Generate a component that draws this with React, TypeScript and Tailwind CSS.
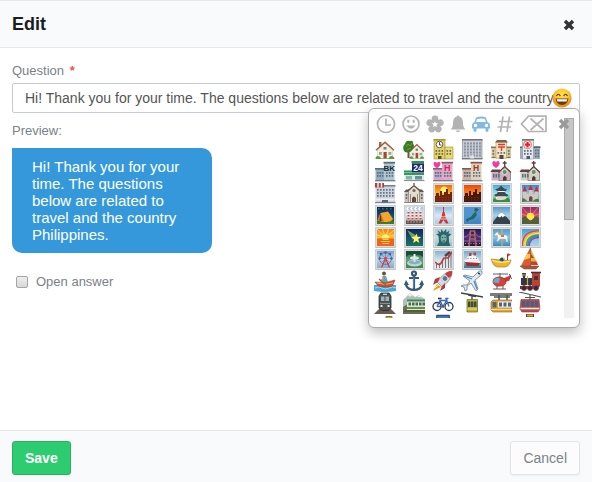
import { useId, type ReactNode } from 'react'

type P = { children?: ReactNode }

function Cell({ children }: P) {
  return (
    <svg viewBox="0 0 22 22" className="block size-[22px]" aria-hidden="true">
      {children}
    </svg>
  )
}

function Tile({ top, mid, bottom, children }: P & { top: string; mid?: string; bottom: string }) {
  const id = useId()
  return (
    <Cell>
      <defs>
        <linearGradient id={`${id}g`} x1="0" y1="0" x2="0" y2="1">
          <stop offset="0" stopColor={top} />
          <stop offset="0.5" stopColor={mid ?? top} />
          <stop offset="1" stopColor={bottom} />
        </linearGradient>
        <clipPath id={`${id}c`}>
          <rect x="3" y="3" width="17" height="17" />
        </clipPath>
      </defs>
      <rect x="1" y="1" width="21" height="21" rx="1" fill="#bfc2c5" />
      <rect x="1.500" y="1.500" width="20" height="19.500" rx="1" fill="#d9dcde" />
      <rect x="3" y="3" width="17" height="17" fill={`url(#${id}g)`} />
      <g clipPath={`url(#${id}c)`}>{children}</g>
    </Cell>
  )
}

function Win({ x, y, c, r, dx = 3, dy = 3, w = 1.6, h = 1.8, f = '#5d7186' }: { x: number; y: number; c: number; r: number; dx?: number; dy?: number; w?: number; h?: number; f?: string }) {
  return (
    <>
      {Array.from({ length: c * r }, (_, i) => (
        <rect key={i} x={x + (i % c) * dx} y={y + Math.floor(i / c) * dy} width={w} height={h} fill={f} />
      ))}
    </>
  )
}

const heart = (x: number, y: number, s: number, f = '#f23c9c') => (
  <path transform={`translate(${x} ${y}) scale(${s})`} d="M0 4C-5 1-4-3-2-3Q0-3 0-1Q0-3 2-3C4-3 5 1 0 4Z" fill={f} />
)

const house = (
  <>
    <rect x="5" y="4" width="2.500" height="5" fill="#9a6a55" />
    <path d="M3.500 12 11 5 18.500 12V20.500H3.500Z" fill="#f7efd6" stroke="#cdbd98" strokeWidth=".5" />
    <path d="M2 12.300 11 4.300 20 12.300" fill="none" stroke="#9d5a4b" strokeWidth="1.400" />
    <rect x="9.500" y="9" width="3" height="2.500" fill="#5f87a8" />
    <rect x="9.500" y="14" width="3.200" height="6.500" fill="#9c4a3c" />
    <rect x="5" y="14" width="2.800" height="2.800" fill="#7fa9c4" />
    <rect x="14.500" y="14" width="2.800" height="2.800" fill="#7fa9c4" />
    <path d="M1.500 21q0-3 2.500-3t3 2.500h8q0-2.500 2.500-2.500t3 3Z" fill="#5a9a3c" />
  </>
)

const towers = (a: string, b: string, roof: string) => (
  <>
    <rect x="1.500" y="9" width="10" height="12" fill={b} />
    <rect x="1" y="8" width="10" height="1.600" fill={roof} />
    <rect x="10" y="3" width="10.500" height="18" fill={a} />
    <rect x="9.500" y="1.800" width="11.500" height="1.700" fill={roof} />
    <Win x={3} y={12} c={3} r={2} dx={2.400} />
    <Win x={12} y={12} c={3} r={2} dx={2.800} />
    <rect x="1" y="20.300" width="20.500" height="1" fill="#596473" />
  </>
)

const church = (wall: string) => (
  <>
    <path d="M1.500 12H11V20.500H1.500Z" fill={wall} />
    <path d="M0.500 12 2 9.500H10V12Z" fill="#584745" />
    <path d="M9 12 14.500 6.500 20.500 12V20.500H9Z" fill={wall} stroke="#69604f" strokeWidth=".6" />
    <path d="M8.500 12.500 14.700 6.500 21 12.500" fill="none" stroke="#594438" strokeWidth="1.200" />
    <path d="M14.700 1V7M12.700 3H16.700" stroke="#594438" strokeWidth="1.300" />
    <circle cx="14.700" cy="12" r="2.600" fill="#668b80" stroke="#ece7c8" />
    <path d="M13 20.500V17.500q1.700-3 3.500 0V20.500Z" fill="#493a35" />
    <Win x={3} y={14} c={3} r={1} dx={2.500} h={3.500} />
  </>
)

const skyline = (f: string) => (
  <>
    <path d="M2 20V14H4V11H7V14H8V9H10V13H12V10H14V7H16V12H18V10H20V20Z" fill={f} />
    <Win x={4.500} y={15} c={5} r={2} w={0.7} h={1} dy={2.500} f="#b94d14" />
  </>
)

const icons: [string, ReactNode][] = [
  ['House', <Cell>{house}</Cell>],
  ['House with garden', <Cell>
    <g transform="translate(5 3) scale(.8 .85)">{house}</g>
    <path d="M4.500 12h2v8H4.500Z" fill="#765035" />
    <path d="M1 13Q-1 8 2 6 3 2 7 3 11 2 10 7 11 11 8 13 4 16 1 13Z" fill="#397a24" />
    <path d="M3 9l2-3 2 2 2-3M4 12l4-2" stroke="#67a642" fill="none" />
  </Cell>],
  ['School', <Cell>
    <rect x="2" y="2" width="11" height="19" fill="#e0d169" stroke="#a29435" strokeWidth=".6" />
    <rect x="13" y="9" width="8" height="12" fill="#e6d976" stroke="#9b8d38" strokeWidth=".6" />
    <rect x="1.500" y="1" width="12" height="1.500" fill="#a6973f" />
    <circle cx="7.500" cy="6.500" r="3.300" fill="#fff" stroke="#57544a" strokeWidth=".9" />
    <path d="M7.500 4V7H9.500" stroke="#222" fill="none" strokeWidth=".8" />
    <Win x={3.500} y={12} c={3} r={2} f="#6c7052" />
    <Win x={14.500} y={12} c={2} r={2} f="#6c7052" />
    <rect x="6" y="18" width="3.500" height="3" fill="#5b5233" />
  </Cell>],
  ['Office', <Cell>
    <rect x="1.500" y="1.500" width="19.500" height="19.500" fill="#c9ccd3" stroke="#777e8a" strokeWidth=".6" />
    <rect x="1" y="1" width="20.500" height="1.500" fill="#6f7077" />
    <Win x={3} y={4.500} c={6} r={5} dy={3} w={1.900} h={2} f="#8791a1" />
    <path d="M1 20.700H21.500" stroke="#6c717b" />
    <rect x="9" y="17.500" width="4" height="3" fill="#e0e4e9" />
  </Cell>],
  ['Japanese post office', <Cell>
    <rect x="1.500" y="9" width="19.500" height="11.500" fill="#d7c89f" />
    <rect x="1" y="8.500" width="20.500" height="1.600" fill="#897449" />
    <path d="M6 20V4H16.500V20Z" fill="#f1e6c8" stroke="#b6a173" strokeWidth=".6" />
    <path d="M5 4.500 7 2H16L18 4.500Z" fill="#776345" />
    <path d="M8 6.500H15M8 9H15M11.500 9V13" stroke="#e43b30" strokeWidth="1.400" />
    <Win x={2.500} y={12} c={1} r={2} f="#6d7a68" />
    <Win x={18} y={12} c={1} r={2} f="#6d7a68" />
    <Win x={7.500} y={14} c={3} r={1} f="#64746e" />
    <path d="M1 20Q4 17 6 20ZM16 20q3-3 5 0Z" fill="#6c8c35" />
    <rect x="9.500" y="17" width="4" height="4" fill="#574739" />
  </Cell>],
  ['Hospital', <Cell>
    <rect x="1" y="9" width="7" height="12" fill="#a0aebc" />
    <rect x="14" y="8" width="7" height="13" fill="#a0aebc" />
    <rect x="1" y="8.500" width="20.500" height="1.500" fill="#566573" />
    <rect x="3.500" y="2" width="11" height="19" fill="#e6e8ec" stroke="#8b929d" strokeWidth=".6" />
    <rect x="3" y="1" width="12" height="1.500" fill="#6d747e" />
    <circle cx="8.500" cy="6.700" r="4" fill="#fff" stroke="#e33e3e" strokeWidth=".7" />
    <path d="M8.500 4V9.500M5.800 6.700H11.300" stroke="#df2729" strokeWidth="2.200" />
    <Win x={5} y={12} c={3} r={2} />
    <Win x={16} y={11.500} c={2} r={3} dx={2.500} />
    <rect x="7.500" y="18" width="3.500" height="3" fill="#515b67" />
  </Cell>],
  ['Bank', <Cell>
    {towers('#b0c5cf', '#93aebc', '#526d7b')}
    <text x="9.500" y="10.500" fontSize="8" fontWeight="bold" fontFamily="Liberation Sans, sans-serif" fill="#152b35">BK</text>
  </Cell>],
  ['Convenience store', <Cell>
    <rect x="9" y="1" width="12" height="20" fill="#dfe6e8" />
    <rect x="1.500" y="11" width="8" height="10" fill="#dfe6e0" />
    <rect x="8.500" y="1" width="12.500" height="2.500" fill="#299456" />
    <rect x="9" y="3.500" width="12" height="9" fill="#1e2969" />
    <text x="10.300" y="11" fontSize="8.500" fontWeight="bold" fontFamily="Liberation Sans, sans-serif" fill="#fff">24</text>
    <rect x="1" y="10.500" width="8" height="2" fill="#299456" />
    <rect x="1" y="13" width="20" height="2" fill="#2d9a5e" />
    <rect x="3" y="16" width="6" height="3.500" fill="#7fb5b2" />
    <rect x="12" y="16" width="7" height="3.500" fill="#65938e" />
    <path d="M1 20.600H21.500" stroke="#7f8b87" />
  </Cell>],
  ['Love hotel', <Cell>
    {towers('#e0a9c4', '#cfa6c9', '#865a7b')}
    {heart(5, 4.500, 0.95)}
    <text x="12" y="11" fontSize="9" fontWeight="bold" fontFamily="Liberation Sans, sans-serif" fill="#df1b69">H</text>
  </Cell>],
  ['Hotel', <Cell>
    {towers('#e2d0be', '#c9b0a0', '#80594b')}
    <text x="12" y="11" fontSize="8.500" fontWeight="bold" fontFamily="Liberation Sans, sans-serif" fill="#923c2c">H</text>
  </Cell>],
  ['Wedding', <Cell>{church('#cfadc0')}{heart(6, 4, 1)}</Cell>],
  ['Church', <Cell>{church('#d3cfc4')}</Cell>],
  ['Department store', <Cell>
    <rect x="1.500" y="4" width="19.500" height="17" fill="#cdd2db" />
    <rect x="1" y="3" width="20.500" height="1.500" fill="#727e90" />
    <rect x="1" y="1" width="9" height="4.500" fill="#b33b3a" />
    <path d="M4 1V5.500M7.500 1V5.500" stroke="#eee" strokeWidth="1.500" />
    <Win x={3} y={7} c={6} r={3} f="#66758b" />
    <rect x="2" y="16.500" width="18.500" height="2" fill="#eeeef0" />
    <rect x="8" y="18" width="6" height="3" fill="#526580" />
    <path d="M1 20.700H21.500" stroke="#6a7587" />
  </Cell>],
  ['European post office', <Cell>
    <path d="M1.500 9H20.500V20.500H1.500Z" fill="#c8c0b3" />
    <path d="M1 10 3 7.500H19L21 10Z" fill="#655852" />
    <path d="M5.500 9 11 4 16.500 9V20.500H5.500Z" fill="#e5ddd0" stroke="#786961" strokeWidth=".6" />
    <path d="M4.500 9 11 3.500 17.500 9M11 4V1" fill="none" stroke="#6d544d" strokeWidth="1.300" />
    <circle cx="11" cy="8.500" r="1.600" fill="#706b66" />
    <Win x={2.700} y={12} c={1} r={2} h={2} />
    <Win x={18} y={12} c={1} r={2} h={2} />
    <path d="M9 20.500V16Q11 13 13 16V20.500Z" fill="#5d4942" />
    <path d="M1 20.500H21M7.500 12V20M14.500 12V20" stroke="#8f877c" />
  </Cell>],
  ['Sunset over buildings', <Tile top="#f0690c" mid="#ffb51b" bottom="#f08a14"><circle cx="12" cy="8" r="3.500" fill="#fff17a" />{skyline('#6d2410')}</Tile>],
  ['Cityscape at dusk', <Tile top="#e8480f" mid="#f98b16" bottom="#eca42a">{skyline('#43160f')}</Tile>],
  ['Japanese castle', <Tile top="#4baada" mid="#a5dce9" bottom="#5faa63">
    <path d="M8 6H14.500V16H8ZM6 11H16.500V17H6Z" fill="#f6f5ec" />
    <path d="M5 7.500Q9 6.500 11.300 3.500 13 6.500 17.500 7.500L15.500 9H7.500ZM4 13Q7 12 8 10H14.500Q16 12 18.500 13L17 14.500H6Z" fill="#3d4c54" />
    <path d="M6 18 7.500 14.500H15.500L17 18Z" fill="#dcdacd" />
    <path d="M3 20Q3 14 6 17.500 10 19 15 17.500 19 13 20 20Z" fill="#3c8d3b" />
  </Tile>],
  ['Castle', <Tile top="#3f86c9" mid="#91c1e2" bottom="#6f8c87">
    <path d="M4 9H7.500V18H4ZM10 8H13.500V18H10ZM16 9H19V18H16ZM6 12H17V19H6Z" fill="#cfc8c0" />
    <path d="M3.500 9.500 5.700 4 8 9.500ZM9.300 8 11.700 3 14 8ZM15 9.500 17.500 4 19.800 9.500Z" fill="#cc2b30" />
    <path d="M10 19V15.500q1.700-3 3.500 0V19Z" fill="#6b4a40" />
    <path d="M3 20V17Q5 15 8 19M14 19Q18 15 20 18V20Z" fill="#517b36" />
  </Tile>],
  ['Tent', <Tile top="#08284d" mid="#18496f" bottom="#377233">
    <path d="M3.500 16.500 6.500 9 14 7.500 19 15 16 18 7 18Z" fill="#f5a52e" /><path d="M6.500 9 10 18 3.500 16.500Z" fill="#d76d17" /><path d="M6.500 9 7.500 17.500H5.500Z" fill="#52391e" />
    <Win x={4.500} y={4.500} c={4} r={1} dx={4} w={0.8} h={0.8} f="#fff" />
    <path d="M3 18Q8 19 20 17V20H3Z" fill="#427c26" />
  </Tile>],
  ['Factory', <Tile top="#aec8db" mid="#dae4e8" bottom="#817b78">
    {[4.5, 8.500, 12.500, 16.500].map(x => <g key={x}><rect x={x} y="7" width="2" height="10" fill="#f6eeeb" /><Win x={x} y={8} c={1} r={3} w={2} h={1.500} f="#c73e3e" /><path d={`M${x + 1} 6Q${x - 2} 5 ${x + 1} 3`} stroke="#fff" strokeWidth="1.500" fill="none" /></g>)}
    <path d="M3 16.500H20V20H3Z" fill="#5e504a" /><Win x={4} y={17.500} c={5} r={1} w={2} h={1} f="#a89c90" />
  </Tile>],
  ['Tokyo tower', <Tile top="#8ebfe1" mid="#d8e8f3" bottom="#a8cce0">
    <path d="M11.500 3V9" stroke="#d9342c" strokeWidth="1" /><path d="M10.500 8H12.500L13.500 13 16.500 19.500H14L11.500 16 9 19.500H6.500L9.500 13Z" fill="#d9342c" /><path d="M9 12.800H14M8.500 15H14.500" stroke="#f4ebe6" strokeWidth=".8" />
  </Tile>],
  ['Map of Japan', <Tile top="#4e93d2" bottom="#3d83c5">
    <path d="M14.500 4 17.500 5.500 15.500 7.500 13.500 6.500ZM14.500 8 15.500 11 12.500 14.500 8.500 15.500 6 17.500 5.500 15.500 10.500 13 12.500 10Z" fill="#28703b" stroke="#174e52" strokeWidth=".5" />
  </Tile>],
  ['Mount Fuji', <Tile top="#5b99c7" mid="#a9d1e9" bottom="#76a2ba">
    <path d="M3 18 10 9H13L20 17V20H3Z" fill="#38424d" /><path d="M7.500 12.200 10 9H13L16 12.500 14 12 13 13.500 11.500 12 10 13.500Z" fill="#fff" />
  </Tile>],
  ['Sunrise over mountains', <Tile top="#8e2c6a" mid="#d94b62" bottom="#5e7137">
    <path d="M11.500 13 2 2M11.500 13 11.500 0M11.500 13 20 2M11.500 13 0 9M11.500 13 22 9" stroke="#e2798a" strokeWidth=".9" /><circle cx="11.500" cy="12.500" r="3.800" fill="#ffe94a" /><path d="M3 14 6 12 11.500 17 17 12 20 14V20H3Z" fill="#55603b" />
  </Tile>],
  ['Sunrise', <Tile top="#f1811c" mid="#ffbe26" bottom="#e45f14">
    <path d="M11.500 12 1 1M11.500 12 7.500 0M11.500 12 15.500 0M11.500 12 21 3M11.500 12 1 8M11.500 12 22 8" stroke="#ffd957" /><circle cx="11.500" cy="12" r="3.500" fill="#fff47a" /><path d="M3 12.500H20V20H3Z" fill="#e9661c" /><path d="M8.500 13.500H14.500M7 15.500H16M8.500 17.500H15" stroke="#ffc74b" />
  </Tile>],
  ['Shooting star', <Tile top="#092855" mid="#154e73" bottom="#1b765a">
    <path d="M4 4 14 10 10 14Z" fill="#7d9a62" /><path d="m13.500 7.500 1 3.200 3.700.2-2.900 2.400 1 3.600-3-2-3.200 2.200 1-3.800-2.700-2.300 3.700-.4Z" fill="#fff36c" />
  </Tile>],
  ['Statue of Liberty', <Tile top="#a8ccdb" mid="#c8dcdd" bottom="#8fc0d2">
    <path d="M6.500 10 4 8 7 7.500 5.500 4.500 9 6.500 9 3 11.500 6 14 3 14.500 6.500 17.500 4.500 16.500 7.500 19.500 8 16.800 10.500 17 16 18.500 20H5L7 16Z" fill="#2b6667" /><ellipse cx="11.700" cy="12.500" rx="3" ry="4" fill="#79aea4" /><path d="M9.800 11.500h1.200M12.500 11.500h1.200M10.500 15h2.500" stroke="#214f53" strokeWidth=".9" />
  </Tile>],
  ['Bridge at night', <Tile top="#261854" mid="#51307d" bottom="#221940">
    <path d="M8 20 9.500 5H13.500L15 20" fill="none" stroke="#b0604f" strokeWidth="1.600" /><path d="M9 9H14M8.500 13H14.500" stroke="#c98360" /><path d="M3 11Q8 11 9.500 5M20 11Q15 11 13.500 5M3 15H20" fill="none" stroke="#9c63ad" /><Win x={4} y={17} c={6} r={1} dx={2.800} w={0.9} h={0.9} f="#eeb067" />
  </Tile>],
  ['Carousel horse', <Tile top="#519dd0" mid="#86c2e2" bottom="#3e88bd">
    <path d="M12 3V20" stroke="#d3b252" strokeWidth="1.200" /><path d="M4.500 8.500 7.500 5.500 9.500 9H16Q18.500 10 17.500 13L18 16H16.500L15.500 13H10L8 15.500 6.500 15 8 12 7 9 5.500 10Z" fill="#fbf7f0" stroke="#a49c94" strokeWidth=".4" /><path d="M11 9H14V11H11Z" fill="#c9705f" /><path d="M7.500 5.500 9.500 9" stroke="#d9a654" />
  </Tile>],
  ['Rainbow', <Tile top="#4a9fdb" mid="#81c3e8" bottom="#aed5df">
    {['#da4259', '#efb239', '#f2e84b', '#44a84c', '#447bc4', '#874ab1'].map((c, i) => <path key={c} d={`M${3.5 + i * 1.4} 22C${2.5 + i * 1.4} ${9 + i} ${9 + i} ${5 + i * 1.3} 21 ${5 + i * 1.3}`} fill="none" stroke={c} strokeWidth="1.500" />)}
  </Tile>],
  ['Ferris wheel', <Tile top="#73a5d2" mid="#b9d3e6" bottom="#89aac6">
    <circle cx="11.500" cy="10.500" r="6" fill="none" stroke="#536a9d" strokeWidth=".8" /><path d="M11.500 4V17M5 10.500H18M7 6 16 15M16 6 7 15" stroke="#617fb0" strokeWidth=".6" /><path d="m11.500 10.500-4 9M11.500 10.500l4 9" stroke="#c9414b" strokeWidth="1.300" />
    {[[11.5, 4.5], [5.500, 10.500], [17.500, 10.500], [7, 6], [16, 6]].map(([x, y]) => <circle key={`${x}-${y}`} cx={x} cy={y} r="1.200" fill="#4a5ba0" />)}
    <circle cx="11.500" cy="10.500" r="1.800" fill="#e9444d" />
  </Tile>],
  ['Fountain', <Tile top="#266246" mid="#5f9f78" bottom="#3b8741">
    <path d="M3 3H20V9Q15 5 11 8 6 5 3 9Z" fill="#164e36" /><ellipse cx="11.500" cy="15" rx="7.500" ry="3.500" fill="#c3d3d8" /><ellipse cx="11.500" cy="14.200" rx="6" ry="2" fill="#7eb1c4" /><path d="M10.500 14V10H12.500V14" fill="#d6e1df" /><ellipse cx="11.500" cy="10" rx="4.500" ry="1.700" fill="#dce7e6" /><path d="M11.500 9V6" fill="none" stroke="#e8f4f8" strokeWidth="2" />
  </Tile>],
  ['Roller coaster', <Tile top="#8bb3d1" mid="#cee0e9" bottom="#efe8e5">
    <path d="M4.500 20V15M7.500 20V15M10.500 20V13M13.500 20V10M16.500 20V7M19 20V5" stroke="#78777a" /><path d="M3 14C9 20 9 14 12 10L16 10 20 4" fill="none" stroke="#c3363d" strokeWidth="1.600" /><path d="M13 8 18 4" stroke="#4c4446" strokeWidth="2.500" />
  </Tile>],
  ['Ship', <Tile top="#74acd2" mid="#b6d7e5" bottom="#2973a0">
    <path d="M6 12V8.500H8L9 7H15V9.500H17L18 13Z" fill="#f9f6f0" /><path d="M8 5H10.500V8H8ZM12.500 4.500H15V7.500H12.500Z" fill="#bd3f38" /><path d="M3 11.500 20 13 17.500 17.500H5.500Z" fill="#f4f2ef" /><path d="M4 14 19 15 17.500 18H5.500Z" fill="#9f2d30" /><Win x={6.500} y={10} c={4} r={1} dx={2.800} w={1.200} h={0.8} /><path d="M3 18H20V20H3Z" fill="#417ea0" />
  </Tile>],
  ['Speedboat', <Cell>
    <path d="M1 11Q8 11 12 13L21 12Q20 18 15 19H7Q3 18 1 11Z" fill="#e9b62e" stroke="#a96520" strokeWidth=".6" /><path d="M2 12Q8 16 20 13" stroke="#ffe26b" fill="none" strokeWidth="1.500" /><path d="M9 12 11 9.500 15 10 15 12 12 13.500Z" fill="#285360" /><path d="M13 10 16 10.500 14 12Z" fill="#f6f0da" /><path d="M17.500 12V6" stroke="#8d3928" /><path d="M17.500 5 21 6.500 18 8.500Z" fill="#d34735" />
  </Cell>],
  ['Sailboat', <Cell>
    <path d="M11 0 2 18H11Z" fill="#df5a32" /><path d="M12 1 19 17H12Z" fill="#e9b638" /><path d="m8 6-3 6 6-2V6Z" fill="#ffc845" /><path d="M12 6 15 10H12ZM12 13.500H17.500L19 17H12Z" fill="#ce3b32" /><path d="M11.500 0V18" stroke="#71432b" strokeWidth=".8" /><path d="M1 18H20L17 21H5Z" fill="#a9573a" stroke="#77412a" strokeWidth=".5" />
  </Cell>],
  ['Rowboat', <Cell>
    <path d="M0 15H22V21Q11 23 0 21Z" fill="#48a8db" /><path d="M1 12Q11 14 21 10L18 17H5Z" fill="#cf4930" stroke="#87402d" strokeWidth=".6" /><path d="M3 13Q11 16 19 13" fill="none" stroke="#edb170" /><circle cx="10" cy="3.500" r="2" fill="#7b4a31" /><path d="M8.500 6 12 6 14 12H8Z" fill="#54a7bd" /><path d="M10 8 6 11" stroke="#d99b72" strokeWidth="1.500" /><path d="M5 9 15 18" stroke="#9b6133" strokeWidth="1.200" /><path d="M1 18q4-2 7 0t7 0 7 0" fill="none" stroke="#a6daf0" />
  </Cell>],
  ['Anchor', <Cell>
    <g fill="none" stroke="#36597b" strokeWidth="2.200"><circle cx="11" cy="3.500" r="2" /><path d="M11 6V20M6 8H16M3 12V15Q5 20 11 20T19 15V12" /></g><path d="M1 15 3 10 6 15ZM16 15 19 10 21 15Z" fill="#36597b" /><path d="M10.700 7V18" stroke="#83a8c5" strokeWidth=".6" />
  </Cell>],
  ['Rocket', <Cell>
    <path d="M20 1Q21 9 10 17L5 12Q12 2 20 1Z" fill="#d3d9df" stroke="#758696" strokeWidth=".7" /><path d="M20 1Q15 1 13 4L17 8Q21 5 20 1Z" fill="#cd3b36" /><path d="M8 7 3 9 1 15 6 12ZM13 13 13 18 8 21 10 16Z" fill="#b8383c" /><circle cx="13" cy="8.500" r="1.900" fill="#48799e" stroke="#617688" /><path d="m5 14-4 7 8-4Z" fill="#ee9a2c" /><path d="M6 15 3 18" stroke="#fff27c" />
  </Cell>],
  ['Airplane', <Cell>
    <path d="M21 1Q22 3 19 6L14 10 17 19 15 21 10 13 6 16V20L4 21 3 17 0 16 2 15H6L9 11 2 6 4 5 12 7 17 2Q19 0 21 1Z" fill="#e4ebf0" stroke="#647f97" strokeWidth=".8" /><path d="M3 6l8 3M13 11l3 8" stroke="#4e86b8" strokeWidth="1.200" /><path d="M17 3 19 4" stroke="#27415d" strokeWidth="1.500" />
  </Cell>],
  ['Helicopter', <Cell>
    <path d="M3 4H18M10 3V8" stroke="#546170" strokeWidth="1" /><path d="M21 5 19.500 10.500 13 13 12 9Z" fill="#cb3835" /><path d="M4 8.500Q10 5 15 9L16 13Q14 17 6 16 1 13 4 8.500Z" fill="#d94137" stroke="#8f3434" strokeWidth=".6" /><path d="M4 9.500Q7 6.500 10 8.500L9 13 3 12.500Z" fill="#64acd0" /><path d="M7 16V19M13 15V19M3 19H16" stroke="#6a565a" /><path d="m19.500 4 2 5" stroke="#434b57" />
  </Cell>],
  ['Steam locomotive', <Cell>
    <path d="M3 3H7L6 8H4ZM2 8H14V15H2Z" fill="#343742" /><path d="M13 3H21V16H13Z" fill="#b94436" /><path d="M12 2.500H22" stroke="#4f2b31" strokeWidth="1.600" /><rect x="15" y="6" width="4" height="4" fill="#4d3234" /><path d="M3 5H6M8.500 6V15" stroke="#d6a842" strokeWidth="1.200" /><path d="M1 16H21L18 19H1Z" fill="#702e2e" />{[5, 11, 17].map(x => <circle key={x} cx={x} cy="18" r="2.500" fill="#242e3c" stroke="#a53b36" strokeWidth=".8" />)}
  </Cell>],
  ['Metro', <Cell>
    <path d="M0 22 5 17H17L22 22Z" fill="#6e5a50" /><path d="M7 1H15L17 4V16L14 18.500H8L5 16V4Z" fill="#4a5255" stroke="#252d31" strokeWidth=".8" /><path d="M7 4.500H10.500V9H7ZM11.500 4.500H15V9H11.500Z" fill="#9eb3b8" /><path d="M9 2.300H13" stroke="#d6ebb6" strokeWidth="1.200" /><path d="M6 11.500H16" stroke="#86968a" /><path d="M6.500 14H8.500M13.500 14H15.500" stroke="#e6f5a3" strokeWidth="1.800" />
  </Cell>],
  ['Mountain railway', <Cell>
    <path d="M0 8 7 1 12 5 16 3 22 7V20H0Z" fill="#b3bebf" /><path d="M5 3 7 1 10 4 8 3.500 7 5ZM14 5 16 3 20 6 17 5Z" fill="#f1f1ee" /><path d="M0 15 6 11 22 15V22H0Z" fill="#66714f" /><path d="M4 8H22V18H4Z" fill="#e8e5c2" /><path d="M4 7.500H22V9.500H4Z" fill="#3f8a56" /><Win x={5.500} y={10.500} c={5} r={1} dx={3.500} w={2.500} h={3} f="#436b6a" /><path d="M4 16H22" stroke="#4b9a4f" strokeWidth="2" /><path d="M1 19H22" stroke="#4b453c" />
  </Cell>],
  ['Bicycle', <Cell>
    <g fill="none" stroke="#303c4e" strokeWidth="1.300"><circle cx="5" cy="14.500" r="4" /><circle cx="17" cy="14.500" r="4" /></g><path d="M5 14.500 8 8.500H14.500L11 14.500H5M8 8.500 11 14.500M17 14.500 14 6.500H16.500" fill="none" stroke="#3c69b5" strokeWidth="1.400" /><path d="M6 6.500H9.500" stroke="#333" strokeWidth="1.600" /><circle cx="11" cy="14.500" r="1.300" fill="#555" />
  </Cell>],
  ['Mountain cableway', <Cell>
    <path d="M0 1 22 5M11 3V8M7 3 15 4.500" stroke="#3c4246" strokeWidth="1.300" /><path d="M6 7.500H16.500V20H6Z" fill="#c4b036" stroke="#6a641e" strokeWidth=".7" /><Win x={7} y={9.500} c={3} r={1} w={2.500} h={5.500} f="#374c49" /><path d="M6.500 17H16" stroke="#e3d266" strokeWidth="1.500" />
  </Cell>],
  ['Suspension railway', <Cell>
    <path d="M0 2.500H22" stroke="#7a7b7d" strokeWidth="3" /><path d="M4 5H20M9 3V8M17 3V8" stroke="#4f5052" strokeWidth="1.500" /><path d="M3 8H22V20H3L1 18V10Z" fill="#dfa53a" stroke="#925b22" strokeWidth=".6" /><path d="M8 9.500H22V15.500H8Z" fill="#f4ede1" /><rect x="2.500" y="10" width="4" height="5.500" fill="#4c6874" /><Win x={9} y={10.500} c={3} r={1} dx={4.500} w={3} h={4} f="#46669a" /><path d="M1 17.500H22" stroke="#f6dc8d" />
  </Cell>],
  ['Aerial tramway', <Cell>
    <path d="M0 0 22 5M11 2V8M6 5.500H16" stroke="#525354" strokeWidth="1.200" /><path d="M2 7.500H20L21 17 19 20H3L1 17Z" fill="#c94740" stroke="#7d3b3b" strokeWidth=".6" /><Win x={3} y={9} c={4} r={1} dx={4.300} w={3.300} h={6} f="#41638a" /><path d="M1.500 16.500H20.500" stroke="#f1eeee" strokeWidth="1.500" />
  </Cell>],
  ['Tractor', <Cell><path d="M12 2.500H18V8H12Z" fill="#bdb52f" stroke="#787721" /></Cell>],
  ['Police car', <Cell />],
  ['Blue car', <Cell><path d="M4 8 5 1.500H17L18 8Z" fill="#4979bd" stroke="#35516f" strokeWidth="1.500" /></Cell>],
  ['Taxi', <Cell />],
  ['Truck', <Cell />],
  ['Bus', <Cell><path d="M7 0H15V3H7Z" fill="#484542" /><path d="M8 1.500H14" stroke="#dba92f" strokeWidth="2" /></Cell>],
]

function Times({ className }: { className: string }) {
  return <svg viewBox="0 0 12 12" className={className} aria-hidden="true"><path d="M3.200.8 6 3.600 8.800.8 11.200 3.200 8.400 6l2.800 2.800-2.400 2.400L6 8.400 3.200 11.200.8 8.800 3.600 6 .8 3.200Z" fill="currentColor" /></svg>
}

const tabs: [string, string, ReactNode][] = [
  ['Recent', 'w-5', <svg viewBox="0 0 20 20" className="size-5" fill="none" stroke="currentColor" strokeWidth="1.700"><circle cx="10" cy="10" r="8.500" /><path d="M10 4.500V11H15" /></svg>],
  ['People', 'w-[18px]', <svg viewBox="1 1 18 18" className="size-[18px]" fill="none" stroke="currentColor" strokeWidth="1.700"><circle cx="10" cy="10" r="8" /><path d="M5.500 11.500Q10 18 14.500 11.500Z" fill="currentColor" stroke="none" /><path d="M7.300 5.800v3M12.700 5.800v3" strokeWidth="2" /></svg>],
  ['Nature', 'w-[18px]', <svg viewBox="0 0 18 18" className="size-[18px]" fill="currentColor">{[0, 72, 144, 216, 288].map(a => <circle key={a} transform={`rotate(${a} 9 9.500)`} cx="9" cy="4" r="3.400" />)}<circle cx="9" cy="9.500" r="4" /><path d="m9 6.300.9 2 2.200.2-1.700 1.500.5 2.200L9 11l-1.900 1.200.5-2.200-1.700-1.500 2.200-.2Z" fill="#fff" /></svg>],
  ['Objects', 'w-4', <svg viewBox="0 0 16 18" className="h-[18px] w-4" fill="currentColor"><path d="M8 0 9.300 1.500Q13 2.500 13 8 13 12.500 15.500 14.500H.5Q3 12.500 3 8 3 2.500 6.700 1.500ZM5.500 15.500H10.500Q8 19 5.500 15.500Z" /></svg>],
  ['Places', 'w-[18px] text-[#82b9e4]', <svg viewBox="0 0 18 18" className="size-[18px]" fill="currentColor"><path fillRule="evenodd" d="M4 2.500Q9 .5 14 2.500L15.500 7Q18 8 18 10V13.500H16.500V16Q15 18 13.500 16V13.500H4.500V16Q3 18 1.500 16V13.500H0V10Q0 8 2.500 7ZM5 4 4.200 7H13.800L13 4Q9 3 5 4ZM3.500 8.700a1.700 1.700 0 1 0 .01 0ZM14.500 8.700a1.700 1.700 0 1 0 .01 0Z" /></svg>],
  ['Symbols', 'w-[18px]', <svg viewBox="-1 0 18 18" className="size-[18px]" fill="none" stroke="currentColor" strokeWidth="1.700"><path d="M6 1.500 3.500 17M12.500 1.500 10 17M2 6.500H15.500M.5 12H14" /></svg>],
  ['Delete', 'w-[27px]', <svg viewBox="0 0 27 18" className="h-[18px] w-[27px]" fill="none" stroke="currentColor" strokeWidth="1.700"><path d="M8.500 1.200H26V16.500H8.500L1.500 9ZM10.500 3.500 23.500 15M23.500 3.500 10.500 15" /></svg>],
]

function EmojiPicker() {
  return (
    <div className="absolute top-[25px] right-0 z-10 w-[212px] rounded-md border border-[#aaa] bg-white pt-1 pr-1 pb-[9px] pl-[5px] shadow-[0_5px_12px_rgba(0,0,0,0.25)]">
      <div className="absolute top-[9px] right-[5px] h-[200px] w-2.5 bg-[#f1f1f1]">
        <div className="h-[102px] border border-[#aaa] bg-[#c6c6c6]" />
      </div>
      <div className="flex h-[22px] items-center gap-1.5 pl-[2px] text-[#b3b3b3]">
        {tabs.map(([label, style, icon]) => (
          <button key={label} type="button" aria-label={label} className={`shrink-0 ${style}`}>{icon}</button>
        ))}
      </div>
      <button type="button" aria-label="Close emoji picker" className="absolute top-[9px] right-[9px] text-[#999]"><Times className="size-3" /></button>
      <div className="mt-[3px] grid h-[180px] grid-cols-[repeat(6,22px)] content-start gap-x-[7px] overflow-hidden">
        {icons.map(([label, icon]) => <button key={label} type="button" aria-label={label} className="size-[22px]">{icon}</button>)}
      </div>
    </div>
  )
}

export default function App() {
  const message = 'Hi! Thank you for your time. The questions below are related to travel and the country Philippines.'
  return (
    <div className="flex min-h-screen flex-col bg-white font-['Liberation_Sans',Arial,sans-serif] text-[13px] text-[#7b8188]">
      <header className="flex h-12 items-center justify-between border-t border-b border-[#e6e9ec] bg-[#f9fafc] px-3">
        <h1 className="text-lg font-bold text-[#1c1c1e]">Edit</h1>
        <button type="button" aria-label="Close" className="mr-[5px] pt-0.5 text-[#333]"><Times className="size-3" /></button>
      </header>
      <main className="flex-1 px-3 pt-3.5">
        <label htmlFor="question" className="block h-[21px] leading-[18px]">Question <span className="ml-0.5 font-bold text-[#e2584d]">*</span></label>
        <div className="relative">
          <input id="question" type="text" defaultValue={message} className="block h-[30px] w-full rounded-xs border border-[#c5cbd0] bg-white pr-6 pl-3 text-sm text-[#555] outline-none" />
          <button type="button" aria-label="Insert emoji" className="absolute top-[5px] right-2">
            <svg viewBox="0 0 20 20" className="size-5" aria-hidden="true">
              <defs><radialGradient id="face" cy=".35"><stop offset="0" stopColor="#ffe04f" /><stop offset=".7" stopColor="#fac431" /><stop offset="1" stopColor="#e99a20" /></radialGradient></defs>
              <circle cx="10" cy="10" r="9.600" fill="url(#face)" />
              <path d="M4.500 8Q6.500 4.500 8.300 8M11.700 8Q13.500 4.500 15.500 8" fill="none" stroke="#5b3715" strokeWidth="1.200" />
              <path d="M3.500 10.500H16.500Q15.500 17 10 17T3.500 10.500Z" fill="#6b3d15" /><path d="M4.700 11.300H15.300L14.500 13.500H5.500Z" fill="#fff" />
            </svg>
          </button>
          <EmojiPicker />
        </div>
        <p className="mt-[9px] leading-[18px]">Preview:</p>
        <div className="mt-2 w-[200px] rounded-[10px] rounded-tl-none bg-[#3598db] px-5 py-2.5 text-[15px] leading-[17px] text-white">{message}</div>
        <label className="mt-5 ml-1 flex items-center gap-2 leading-[18px]">
          <input type="checkbox" className="size-3 appearance-none rounded-xs border border-[#a5a5a5] bg-linear-to-b from-[#eee] to-[#d8d8d8]" />
          Open answer
        </label>
      </main>
      <footer className="flex items-start justify-between border-t border-[#e6e9ec] bg-[#f9fafc] px-3 pt-2.5 pb-[7px] text-sm">
        <button type="button" className="h-[34px] rounded-[3px] border border-[#29b162] bg-[#2ecc71] px-3 font-bold text-white">Save</button>
        <button type="button" className="h-[34px] rounded-[3px] border border-[#e2e5e8] bg-[#fcfcfd] px-3 shadow-xs">Cancel</button>
      </footer>
    </div>
  )
}
